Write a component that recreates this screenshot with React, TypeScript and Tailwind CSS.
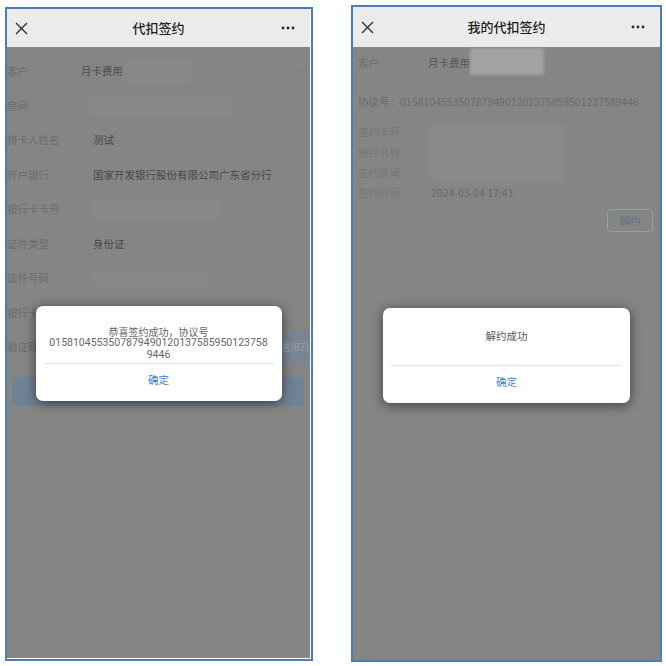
import React from "react";

const font = "font-['Noto_Sans_CJK_SC','Noto_Sans',sans-serif]";

function CloseIcon() {
  return (
    <svg width="13" height="13" viewBox="0 0 13 13" fill="none">
      <path d="M1 1L12 12M12 1L1 12" stroke="#2a2a2a" strokeWidth="1.3" />
    </svg>
  );
}

function MoreIcon() {
  return (
    <svg width="14" height="4" viewBox="0 0 14 4">
      <circle cx="2" cy="2" r="1.4" fill="#2a2a2a" />
      <circle cx="7" cy="2" r="1.4" fill="#2a2a2a" />
      <circle cx="12" cy="2" r="1.4" fill="#2a2a2a" />
    </svg>
  );
}

function Chevron() {
  return (
    <svg width="15" height="8" viewBox="0 0 15 8" fill="none">
      <path d="M1 1L7.5 7L14 1" stroke="#7c7c7a" strokeWidth="1" />
    </svg>
  );
}

function Header({ title, height }: { title: string; height: string }) {
  return (
    <div className={`${height} shrink-0 bg-[#ebebeb] flex items-center px-[8px]`}>
      <div className="w-[30px] flex items-center">
        <CloseIcon />
      </div>
      <div className="flex-1 text-center text-[13px] font-medium text-[#1c1c1c]">{title}</div>
      <div className="w-[30px] flex justify-end pr-[7px]">
        <MoreIcon />
      </div>
    </div>
  );
}

function Mosaic({ className }: { className: string }) {
  return <div className={`rounded-[3px] blur-[2px] ${className}`} />;
}

type Row = { label: string; value?: string; blur?: string };

const leftRows: Row[] = [
  { label: "房间", blur: "w-[144px] h-[21px] ml-[-4px]" },
  { label: "持卡人姓名", value: "测试" },
  { label: "开户银行", value: "国家开发银行股份有限公司广东省分行" },
  { label: "银行卡卡号", blur: "w-[132px] h-[22px] ml-[-3px]" },
  { label: "证件类型", value: "身份证" },
  { label: "证件号码", blur: "w-[120px] h-[17px] ml-[-3px]" },
  { label: "银行卡预留手机号" },
];

function SuccessDialog() {
  return (
    <div className="w-[246px] h-[95px] bg-white rounded-[7px] shadow-[0_2px_12px_rgba(0,0,0,0.55)] flex flex-col">
      <div className="pt-[20px] h-[57px] text-center text-[10px] leading-[11.5px] text-[#666]">
        <div>恭喜签约成功，协议号</div>
        <div className="font-['Roboto',sans-serif] text-[10.5px]">0158104553507879490120137585950123758</div>
        <div className="font-['Roboto',sans-serif] text-[10.5px]">9446</div>
      </div>
      <div className="mx-[8px] h-px bg-[#e3e3e3]" />
      <div className="flex-1 flex items-center justify-center pb-[4px] text-[10.5px] text-[#3a7bd0]">确定</div>
    </div>
  );
}

function LeftPhone() {
  return (
    <div className="ml-[5px] mt-[7px] w-[308px] h-[654px] border-2 border-[#4a7ebb] flex">
      <div className="flex-1 flex flex-col border-r border-b border-white">
        <Header title="代扣签约" height="h-[38px]" />
        <div className="relative flex-1 bg-[#858583] flex flex-col pt-[7px] text-[10.5px] overflow-hidden">
          <div className="h-[34.5px] flex items-center">
            <div className="w-[74px] text-[#6c6c6a]">客户</div>
            <div className="text-[#4c4c4a]">月卡费用</div>
            <Mosaic className="w-[70px] h-[23px] bg-[#888886]" />
            <div className="ml-auto mr-[2px]">
              <Chevron />
            </div>
          </div>
          {leftRows.map((r) => (
            <div key={r.label} className="h-[34.5px] flex items-center">
              <div className="w-[86px] text-[#6c6c6a] whitespace-nowrap">{r.label}</div>
              {r.value && <div className="text-[#484846]">{r.value}</div>}
              {r.blur && <Mosaic className={`bg-[#888886] ${r.blur}`} />}
            </div>
          ))}
          <div className="h-[34.5px] flex items-center">
            <div className="w-[86px] text-[#6c6c6a]">验证码</div>
            <div className="ml-auto h-full w-[90px] bg-[#7a8594] flex items-center justify-end pr-[1px] text-[#99a2ad]">
              重新发送(87)
            </div>
          </div>
          <div className="mt-[12px] ml-[5px] mr-[6px] h-[29px] rounded-[3px] bg-[#6f8296]" />

          <div className="absolute inset-0 flex items-center justify-center pt-[1px]">
            <SuccessDialog />
          </div>
        </div>
      </div>
    </div>
  );
}

function CancelDialog() {
  return (
    <div className="w-[247px] h-[95px] bg-white rounded-[7px] shadow-[0_2px_12px_rgba(0,0,0,0.55)] flex flex-col">
      <div className="h-[57px] flex items-center justify-center text-[10.5px] text-[#555]">解约成功</div>
      <div className="mx-[8px] h-px bg-[#e3e3e3]" />
      <div className="flex-1 flex items-center justify-center pb-[4px] text-[10.5px] text-[#4a86cf]">确定</div>
    </div>
  );
}

const detailRows = [
  { label: "签约卡号", value: "" },
  { label: "账户名称", value: "" },
  { label: "签约房间", value: "" },
  { label: "签约时间", value: "2024-03-04 17:41" },
];

function RightPhone() {
  return (
    <div className="ml-[38px] mt-[5px] w-[311px] h-[657px] border-2 border-[#4a7ebb] flex">
      <div className="flex-1 flex flex-col">
        <Header title="我的代扣签约" height="h-[40px]" />
        <div className="relative flex-1 bg-[#858583] flex flex-col text-[10.5px] overflow-hidden">
          <div className="h-[31px] flex items-center pl-[5px]">
            <div className="w-[70px] text-[#727270]">客户</div>
            <div className="text-[#555553]">月卡费用</div>
            <div className="self-start mt-[1px] w-[74px] h-[27px] bg-[#a2a2a0] blur-[1.5px]" />
            <div className="ml-auto mr-[3px] mt-[4px]">
              <Chevron />
            </div>
          </div>
          <div className="pt-[17px] pl-[5px] leading-[14px] text-[#6c6c6a] whitespace-nowrap">
            协议号：01581045535078794901201375859501237589446
          </div>
          <div className="relative mt-[13px] pl-[5px]">
            {detailRows.map((r) => (
              <div key={r.label} className="h-[20.3px] flex items-center">
                <div className="w-[73px] text-[#767674]">{r.label}</div>
                <div className="text-[#6a6a68]">{r.value}</div>
              </div>
            ))}
            <div className="absolute left-[77px] top-[3px] w-[135px] h-[58px] rounded-[4px] bg-[#8a8a88] blur-[3px]" />
          </div>
          <div className="mt-[6px] ml-auto mr-[7px] w-[46px] h-[23px] rounded-[4px] border border-[#8da0b6] flex items-center justify-center text-[#627286]">
            解约
          </div>

          <div className="absolute inset-0 flex items-center justify-center pt-[3px]">
            <CancelDialog />
          </div>
        </div>
      </div>
    </div>
  );
}

export default function App() {
  return (
    <div className={`w-[666px] h-[666px] bg-white flex items-start ${font}`}>
      <LeftPhone />
      <RightPhone />
    </div>
  );
}
